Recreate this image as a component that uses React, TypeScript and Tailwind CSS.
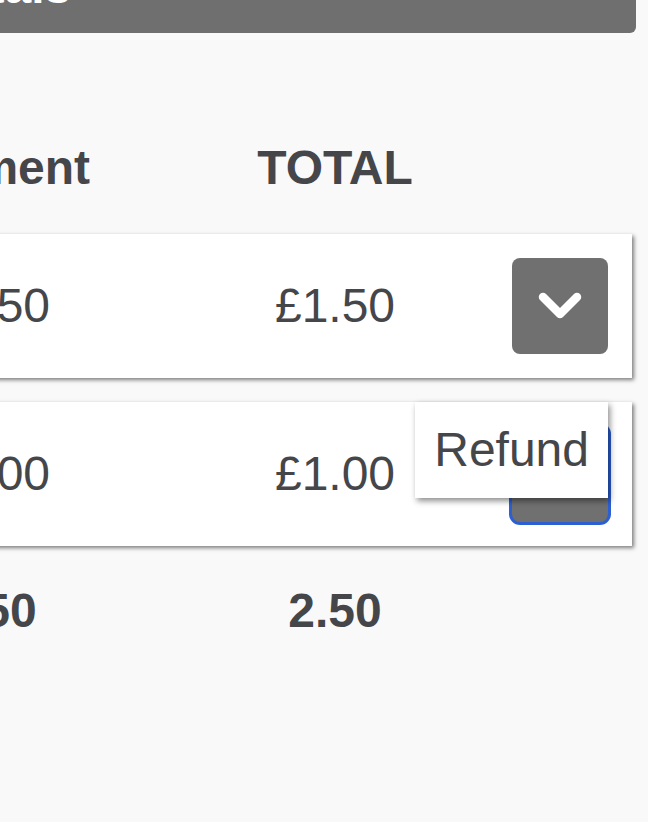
import React from 'react';

type Row = { payment: string; total: string; open?: boolean };

const rows: Row[] = [
    { payment: '£1.50', total: '£1.50' },
    { payment: '£1.00', total: '£1.00', open: true },
];

const ChevronDown: React.FC = () => (
    <svg width="44" height="28" viewBox="0 0 44 28" fill="none">
        <polyline points="5,5 22,22 39,5" stroke="white" strokeWidth="8.5" strokeLinecap="round" strokeLinejoin="round" />
    </svg>
);

const RowCard: React.FC<{ row: Row }> = ({ row }) => (
    <div className="flex items-center h-[144px] mr-[4px] bg-white shadow-[2px_2px_4px_rgba(0,0,0,0.5)]">
        <div className="ml-[190px] w-[200px] text-center">{row.payment}</div>
        <div className="ml-[145px] w-[200px] text-center">{row.total}</div>
        <div className="relative ml-auto mr-[24px]">
            <button
                className={`flex items-center justify-center w-[96px] h-[96px] rounded-[8px] bg-[#707070] ${row.open ? 'ring-[3px] ring-[#2c5fd2]' : ''}`}
            >
                <ChevronDown />
            </button>
            {row.open && (
                <div className="absolute right-0 top-[-24px] z-10 flex items-center h-[96px] px-[19px] bg-white shadow-[2px_3px_6px_rgba(0,0,0,0.45)]">
                    Refund
                </div>
            )}
        </div>
    </div>
);

const App: React.FC = () => {
    return (
        <div className="h-screen overflow-hidden bg-[#f9f9f9] text-[#45464a] text-[48px] leading-[48px] font-['Liberation_Sans',Arial,sans-serif]">
            <div className="w-[936px] -ml-[300px] -mt-[57px]">
                {/* Section header */}
                <div className="bg-[#6f6f6f] rounded-b-[6px] pt-[20px] pb-[22px] px-[20px] text-white font-bold">
                    Payment Totals
                </div>

                {/* Column headings */}
                <div className="flex mt-[111px] font-bold">
                    <div className="ml-[190px] w-[200px] text-center">Payment</div>
                    <div className="ml-[145px] w-[200px] text-center">TOTAL</div>
                </div>

                {/* Rows */}
                <div className="mt-[42px] flex flex-col gap-[24px]">
                    {rows.map((row, i) => (
                        <RowCard key={i} row={row} />
                    ))}
                </div>

                {/* Totals */}
                <div className="flex mt-[41px] font-bold">
                    <div className="ml-[190px] w-[200px] text-center">2.50</div>
                    <div className="ml-[145px] w-[200px] text-center">2.50</div>
                </div>
            </div>
        </div>
    );
};

export default App;
